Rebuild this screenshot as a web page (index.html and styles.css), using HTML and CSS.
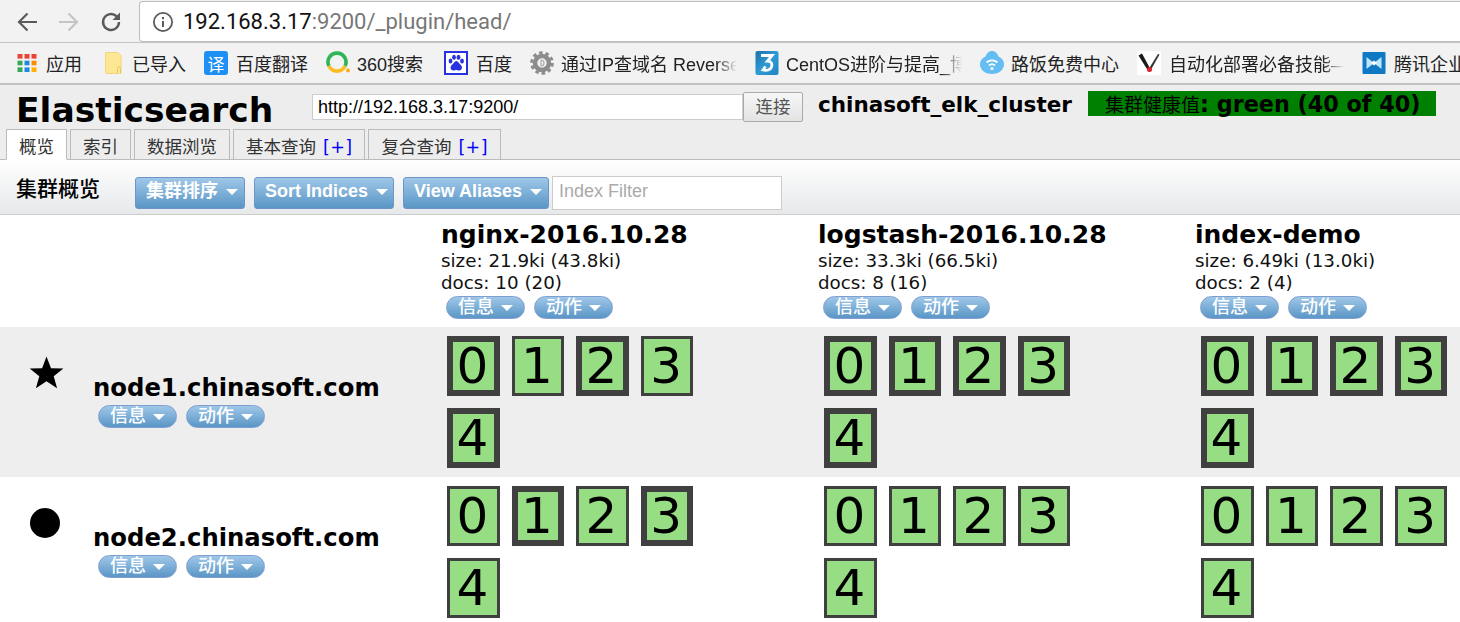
FILE: index.html
```html
<!DOCTYPE html>
<html lang="zh">
<head>
<meta charset="utf-8">
<title>Elasticsearch head</title>
<link rel="stylesheet" href="styles.css">
</head>
<body>
<header class="chrome">
  <div class="navbar">
    <svg class="nav-icon" viewBox="0 0 24 24"><path d="M22 12H4M12.500 3.500L4 12l8.500 8.500" fill="none" stroke="#5a5a5a" stroke-width="2.200"/></svg>
    <svg class="nav-icon" viewBox="0 0 24 24"><path d="M2 12h18M11.500 3.500L20 12l-8.500 8.500" fill="none" stroke="#c4c4c4" stroke-width="2.200"/></svg>
    <svg class="nav-icon" viewBox="0 0 24 24"><path d="M20 12a8 8 0 1 1-2.300-5.600" fill="none" stroke="#5a5a5a" stroke-width="2.400"/><path d="M21 2.500v7.500h-7.500z" fill="#5a5a5a"/></svg>
    <div class="omnibox">
      <svg class="info" viewBox="0 0 20 20"><circle cx="10" cy="10" r="8.300" fill="none" stroke="#5a5a5a" stroke-width="1.600"/><path d="M10 9v5.500M10 5.500v2" stroke="#5a5a5a" stroke-width="1.800"/></svg>
      <span class="host">192.168.3.17</span><span class="path">:9200/_plugin/head/</span>
    </div>
  </div>
  <nav class="bookmarks">
    <div class="bm w-apps"><svg class="bm-icon" viewBox="0 0 20 20"><g><rect x="0.500" y="1" width="5" height="4.600" fill="#ea4335"/><rect x="7.500" y="1" width="5" height="4.600" fill="#ea4335"/><rect x="14.500" y="1" width="5" height="4.600" fill="#ea4335"/><rect x="0.500" y="7.700" width="5" height="4.600" fill="#34a853"/><rect x="7.500" y="7.700" width="5" height="4.600" fill="#1e88e5"/><rect x="14.500" y="7.700" width="5" height="4.600" fill="#fb8c00"/><rect x="0.500" y="14.400" width="5" height="4.600" fill="#34a853"/><rect x="7.500" y="14.400" width="5" height="4.600" fill="#1e88e5"/><rect x="14.500" y="14.400" width="5" height="4.600" fill="#ffb300"/></g></svg><span>应用</span></div>
    <div class="bm w-folder"><svg class="bm-icon folder" viewBox="0 0 18 24"><path d="M1.500 1.500h12.500l3 3v18H2.500a1 1 0 0 1-1-1z" fill="#fee794" stroke="#f4d67a"/><path d="M13.500 22.500v-5q0-1.500 1.500-1.500t1.500 1.500v5" fill="#fee794" stroke="#e9c860"/></svg><span>已导入</span></div>
    <div class="bm w-fanyi"><span class="tile tile-blue">译</span><span>百度翻译</span></div>
    <div class="bm w-360"><svg class="bm-icon" viewBox="0 0 24 24"><path d="M2.900 15A9 9 0 1 1 19.100 15" fill="none" stroke="#2fb457" stroke-width="3.600"/><path d="M2.900 15A9 9 0 0 0 19.100 15" fill="none" stroke="#fbbd20" stroke-width="3.600"/><circle cx="22" cy="19.500" r="1.900" fill="#fba919"/></svg><span>360搜索</span></div>
    <div class="bm w-baidu"><svg class="bm-icon" viewBox="0 0 24 24"><rect x="1" y="1" width="22" height="22" fill="#fff" stroke="#2932e1" stroke-width="2"/><ellipse cx="6.500" cy="10" rx="1.900" ry="2.500" fill="#2932e1"/><ellipse cx="10" cy="6.300" rx="1.900" ry="2.500" fill="#2932e1"/><ellipse cx="14.500" cy="6.300" rx="1.900" ry="2.500" fill="#2932e1"/><ellipse cx="18" cy="10" rx="1.900" ry="2.500" fill="#2932e1"/><path d="M12.300 10c-2 0-2.500 2.500-4.500 4-2 1.500-1.500 5.500 1.500 5.500 1.500 0 2-.5 3-.5s1.500.5 3 .5c3 0 3.500-4 1.500-5.500-2-1.500-2.500-4-4.500-4z" fill="#2932e1"/></svg><span>百度</span></div>
    <div class="bm w-ip"><svg class="bm-icon" viewBox="0 0 24 24"><circle cx="12" cy="12" r="7" fill="none" stroke="#8c8c8c" stroke-width="4.500"/><circle cx="12" cy="12" r="10.300" fill="none" stroke="#8c8c8c" stroke-width="3" stroke-dasharray="3.500 2.970"/><path d="M11 9v6M11 9a3 3 0 0 1 0 6" fill="none" stroke="#aaa" stroke-width="1.200"/></svg><span class="fade">通过IP查域名 Reverse</span></div>
    <div class="bm w-centos"><svg class="bm-icon" viewBox="0 0 24 24"><defs><linearGradient id="cg" x1="0" y1="0" x2="1" y2="1"><stop offset="0" stop-color="#1c6fa8"/><stop offset="0.500" stop-color="#2f9bd6"/><stop offset="1" stop-color="#1e86c2"/></linearGradient></defs><rect x="0.500" y="0" width="23" height="24" rx="2" fill="url(#cg)"/><path d="M6 4.500h11l-4.500 5.500c4 0 5 3 4 6-1 3-5 4-8.500 3l2.500-3.500" fill="none" stroke="#fff" stroke-width="2.800"/></svg><span class="fade">CentOS进阶与提高_博</span></div>
    <div class="bm w-wifi"><svg class="bm-icon" viewBox="0 0 24 24"><path d="M12 0c3.500 0 5.500 2.500 6.500 5.500C21.500 7 24 9.500 24 13c0 6-5 10-12 10S0 19 0 13c0-3.500 2.500-6 5.500-7.500C6.500 2.500 8.500 0 12 0z" fill="#64bdf3"/><path d="M6.500 11.500a8 8 0 0 1 11 0M9 14.500a4.500 4.500 0 0 1 6 0" fill="none" stroke="#fff" stroke-width="1.800"/><circle cx="12" cy="17.500" r="1.600" fill="#fff"/></svg><span>路饭免费中心</span></div>
    <div class="bm w-auto"><svg class="bm-icon" viewBox="0 0 24 24"><rect width="24" height="24" fill="#fff"/><path d="M1.500 4.500L5 2.500l7 13 1 5h-1.500z" fill="#1a1a1a"/><path d="M22.500 3.500L13 20.500l-1-3 9-14.500z" fill="#333"/><circle cx="12.500" cy="18.500" r="2.500" fill="#e3212b"/></svg><span class="fade">自动化部署必备技能—</span></div>
    <div class="bm w-tx"><svg class="bm-icon" viewBox="0 0 24 24"><rect x="0.500" y="1" width="23" height="22" rx="1" fill="#0f79c4"/><path d="M4.500 6l7.500 6 7.500-6v12L12 12l-7.500 6z" fill="#bfe6fb"/><path d="M9 12l3-2.500 3 2.500-3 2.500z" fill="#fff"/></svg><span>腾讯企业</span></div>
  </nav>
</header>

<main class="app">
  <div class="top">
    <div class="brand-line">
      <h1 class="brand">Elasticsearch</h1>
      <input class="uri" type="text" value="http://192.168.3.17:9200/">
      <button class="connect" type="button">连接</button>
      <span class="cluster">chinasoft_elk_cluster</span>
      <span class="health"><span class="cjk-serif">集群健康值</span>: green (40 of 40)</span>
    </div>
    <div class="tabs">
      <span class="tab active">概览</span>
      <span class="tab">索引</span>
      <span class="tab">数据浏览</span>
      <span class="tab">基本查询 <b class="plus">[+]</b></span>
      <span class="tab">复合查询 <b class="plus">[+]</b></span>
    </div>
  </div>

  <div class="toolbar">
    <h2 class="tool-title">集群概览</h2>
    <button class="btn b-sort" type="button">集群排序<i class="caret"></i></button>
    <button class="btn b-indices" type="button">Sort Indices<i class="caret"></i></button>
    <button class="btn b-alias" type="button">View Aliases<i class="caret"></i></button>
    <input class="filter" type="text" placeholder="Index Filter">
  </div>

  <div class="grid">
    <div class="corner"></div>
    <div class="index"><h3>nginx-2016.10.28</h3><p>size: 21.9ki (43.8ki)</p><p>docs: 10 (20)</p><div class="pills"><button class="pill" type="button">信息<i class="caret"></i></button><button class="pill" type="button">动作<i class="caret"></i></button></div></div>
    <div class="index"><h3>logstash-2016.10.28</h3><p>size: 33.3ki (66.5ki)</p><p>docs: 8 (16)</p><div class="pills"><button class="pill" type="button">信息<i class="caret"></i></button><button class="pill" type="button">动作<i class="caret"></i></button></div></div>
    <div class="index"><h3>index-demo</h3><p>size: 6.49ki (13.0ki)</p><p>docs: 2 (4)</p><div class="pills"><button class="pill" type="button">信息<i class="caret"></i></button><button class="pill" type="button">动作<i class="caret"></i></button></div></div>

    <div class="node odd">
      <svg class="node-icon" viewBox="0 0 34 34"><path d="M16.500 .5l4.500 11.700 12.400.4-9.700 7.700 3.400 12-10.600-7-10.600 7 3.400-12L-.3 12.600l12.400-.4z" fill="#000"/></svg>
      <div class="node-body"><div class="node-name">node1.chinasoft.com</div><div class="pills"><button class="pill" type="button">信息<i class="caret"></i></button><button class="pill" type="button">动作<i class="caret"></i></button></div></div>
    </div>
    <div class="shards odd"><span class="shard pri">0</span><span class="shard">1</span><span class="shard pri">2</span><span class="shard">3</span><span class="shard pri">4</span></div>
    <div class="shards odd"><span class="shard pri">0</span><span class="shard pri">1</span><span class="shard pri">2</span><span class="shard pri">3</span><span class="shard pri">4</span></div>
    <div class="shards odd"><span class="shard pri">0</span><span class="shard pri">1</span><span class="shard pri">2</span><span class="shard pri">3</span><span class="shard pri">4</span></div>

    <div class="node">
      <svg class="node-icon" viewBox="0 0 34 34"><circle cx="15" cy="17" r="15" fill="#000"/></svg>
      <div class="node-body"><div class="node-name">node2.chinasoft.com</div><div class="pills"><button class="pill" type="button">信息<i class="caret"></i></button><button class="pill" type="button">动作<i class="caret"></i></button></div></div>
    </div>
    <div class="shards"><span class="shard">0</span><span class="shard pri">1</span><span class="shard">2</span><span class="shard pri">3</span><span class="shard">4</span></div>
    <div class="shards"><span class="shard">0</span><span class="shard">1</span><span class="shard">2</span><span class="shard">3</span><span class="shard">4</span></div>
    <div class="shards"><span class="shard">0</span><span class="shard">1</span><span class="shard">2</span><span class="shard">3</span><span class="shard">4</span></div>
  </div>
</main>
</body>
</html>
```

FILE: styles.css
```css
* { box-sizing: border-box; }
html, body { margin: 0; height: 622px; overflow: hidden; background: #fff; }
body { font-family: "DejaVu Sans", "Noto Sans CJK SC", sans-serif; color: #000; }
button { font-family: inherit; padding: 0; }
h1, h2, h3, p { margin: 0; }

/* browser chrome */
.chrome { background: #f2f2f2; border-bottom: 2px solid #c2c2c2; height: 85px; }
.navbar { height: 43px; display: flex; align-items: flex-start; padding: 10px 0 0 15px; gap: 18px; border-bottom: 1px solid #c4c4c4; }
.nav-icon { width: 24px; height: 24px; flex: none; }
.omnibox { flex: 1; height: 41px; margin-top: -9px; margin-left: -2px; background: #fff; border: 1px solid #bdbdbd; border-right: 0; border-radius: 4px 0 0 4px; display: flex; align-items: center; padding-left: 12px; font: 22px "Roboto", "Liberation Sans", sans-serif; }
.info { width: 22px; height: 22px; margin-right: 9px; flex: none; }
.host { color: #111; }
.path { color: #777; }
.bookmarks { height: 40px; display: flex; align-items: center; padding-left: 17px; gap: 18px; font: 18px "Liberation Sans", "Noto Sans CJK SC", sans-serif; color: #222; white-space: nowrap; overflow: hidden; }
.bm { display: flex; align-items: center; gap: 8px; flex: none; }
.bm-icon { width: 24px; height: 24px; flex: none; }
.folder { width: 18px; }
.tile { width: 24px; height: 24px; border-radius: 3px; display: flex; align-items: center; justify-content: center; color: #fff; font-size: 17px; flex: none; }
.tile-blue { background: #1e90f5; }
.fade { display: block; overflow: hidden; flex: 1; -webkit-mask-image: linear-gradient(90deg, #000 88%, transparent); mask-image: linear-gradient(90deg, #000 88%, transparent); }
.w-apps { width: 69px; gap: 9px; } .w-apps .bm-icon { width: 20px; height: 20px; }
.w-folder { width: 82px; gap: 10px; }
.w-fanyi { width: 104px; }
.w-360 { width: 100px; gap: 7px; }
.w-baidu { width: 68px; }
.w-ip { width: 207px; gap: 7px; }
.w-centos { width: 207px; gap: 7px; }
.w-wifi { width: 139px; gap: 7px; }
.w-auto { width: 207px; }
.w-tx { flex: 1; min-width: 0; }

/* app header */
.top { height: 75px; background: #ededed; border-bottom: 1px solid #bbb; position: relative; }
.brand-line { display: flex; align-items: flex-start; height: 44px; padding-left: 16px; }
.brand { font-size: 34.500px; font-weight: 700; line-height: 44px; margin-top: 3px; width: 296px; flex: none; }
.uri { width: 431px; height: 26px; margin-top: 9px; border: 1px solid #ccc; background: #fff; padding: 0 5px; font: 18px "Liberation Sans", sans-serif; color: #000; flex: none; }
.connect { width: 60px; height: 30px; margin-top: 7px; padding-bottom: 2px; border: 1px solid #aaa; border-radius: 2px; background: linear-gradient(#f7f7f7, #e3e3e3); font: 17.500px/24px "Noto Sans CJK SC", sans-serif; color: #555; flex: none; }
.cluster { font-size: 21.500px; font-weight: 700; margin-left: 15px; line-height: 26px; margin-top: 7px; width: 270px; flex: none; white-space: nowrap; }
.health { width: 348px; height: 25px; margin-top: 6px; background: #008000; font-size: 22.300px; font-weight: 700; line-height: 25px; padding-left: 17px; flex: none; white-space: nowrap; }
.cjk-serif { font-family: "Noto Sans CJK SC", sans-serif; font-weight: 400; font-size: 19px; }
.tabs { display: flex; gap: 3px; padding-left: 6px; height: 31px; margin-bottom: -1px; }
.tab { height: 31px; padding: 0 12px; background: #ededed; border: 1px solid #bbb; font: 17.500px/32px "Noto Sans CJK SC", sans-serif; color: #333; white-space: nowrap; }
.tab.active { background: #fff; border-bottom-color: #fff; position: relative; z-index: 1; }
.plus { font-weight: 400; color: #00f; letter-spacing: .4px; margin-left: 3px; font-family: "DejaVu Sans", sans-serif; }

/* toolbar */
.toolbar { height: 55px; display: flex; align-items: flex-start; padding: 17px 0 0 16px; background: linear-gradient(#fff, #e6e8ea); border-bottom: 1px solid #ccc; }
.tool-title { font: 500 21px/30px "Noto Sans CJK SC", sans-serif; width: 119px; flex: none; margin-top: -5px; }
.btn { height: 32px; margin-right: 9px; padding: 0 0 4px 10px; text-align: left; border: 1px solid #6f95c8; border-radius: 3px; background: linear-gradient(#9fc7e8, #5a96c6); color: #fff; font: 700 18px/26px "Liberation Sans", "Noto Sans CJK SC", sans-serif; white-space: nowrap; flex: none; }
.caret { display: inline-block; width: 0; height: 0; border: 6px solid transparent; border-top: 6px solid #fff; border-bottom: 0; margin-left: 8px; vertical-align: 2px; }
.b-sort { width: 110px; }
.b-indices { width: 140px; }
.b-alias { width: 146px; margin-right: 3px; }
.filter { width: 230px; height: 34px; margin-top: -1px; border: 1px solid #ccc; background: #fff; padding: 0 6px 4px; font: 18px "Liberation Sans", sans-serif; flex: none; }
.filter::placeholder { color: #aaa; opacity: 1; }

/* cluster grid */
.grid { display: grid; grid-template-columns: 441px 377px 377px 1fr; grid-template-rows: 112px 150px 150px; }
.index { padding-top: 4px; }
.index h3 { font-size: 25px; line-height: 31px; font-weight: 700; white-space: nowrap; }
.index p { font-size: 18.300px; line-height: 22px; color: #111; white-space: nowrap; }
.pills { display: flex; gap: 9px; margin-left: 5px; margin-top: 2px; }
.pill { width: 79px; height: 23px; padding: 0 0 5px 11px; text-align: left; border: 1px solid #7f9fd0; border-radius: 12px; background: linear-gradient(#9fc7e8, #5a96c6); color: #fff; font: 500 18px/16px "Noto Sans CJK SC", sans-serif; white-space: nowrap; }
.pill .caret { margin-left: 7px; vertical-align: 2px; }
.odd { background: #eee; }
.node { display: flex; align-items: flex-start; padding: 29px 0 0 30px; }
.node-icon { width: 34px; height: 34px; flex: none; }
.node-body { margin-left: 30px; padding-top: 16px; }
.node-name { font-size: 24.300px; font-weight: 700; line-height: 32px; white-space: nowrap; margin-left: -1px; }
.node-body .pills { margin-left: 4px; margin-top: 1px; }
.shards { display: grid; grid-template-columns: repeat(4, 52.600px); grid-auto-rows: 60px; gap: 12px; align-content: start; padding: 9px 0 0 6px; }
.shard { height: 60px; padding-right: 2px; border: 3px solid #404040; background: #96dd84; font-size: 50px; line-height: 54px; text-align: center; display: block; }
.shard.pri { border-width: 6px; line-height: 48px; }
```
